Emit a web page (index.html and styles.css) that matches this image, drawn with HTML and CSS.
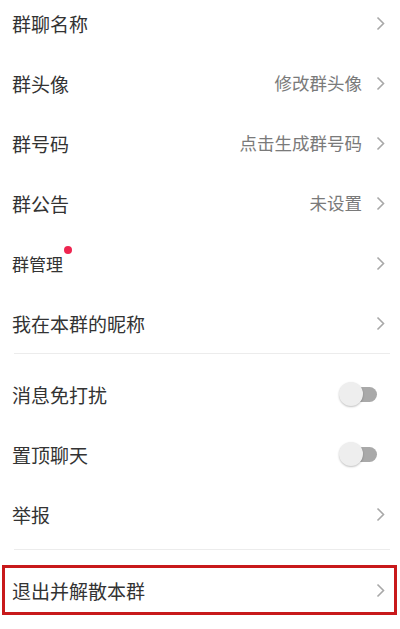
FILE: index.html
```html
<!DOCTYPE html>
<html lang="zh-CN">
<head>
  <meta charset="UTF-8">
  <title>群聊设置</title>
  <link rel="stylesheet" href="styles.css">
</head>
<body>

<div class="settings">
  <div class="group group-top">
    <div class="row">
      <span class="label">群聊名称</span>
      <span class="right"><svg class="chevron" viewBox="0 0 9 15"><path d="M1.5 1.5 L7.5 7.5 L1.5 13.5"/></svg></span>
    </div>
    <div class="row">
      <span class="label">群头像</span>
      <span class="right"><span class="value">修改群头像</span><svg class="chevron" viewBox="0 0 9 15"><path d="M1.5 1.5 L7.5 7.5 L1.5 13.5"/></svg></span>
    </div>
    <div class="row">
      <span class="label">群号码</span>
      <span class="right"><span class="value">点击生成群号码</span><svg class="chevron" viewBox="0 0 9 15"><path d="M1.5 1.5 L7.5 7.5 L1.5 13.5"/></svg></span>
    </div>
    <div class="row">
      <span class="label">群公告</span>
      <span class="right"><span class="value">未设置</span><svg class="chevron" viewBox="0 0 9 15"><path d="M1.5 1.5 L7.5 7.5 L1.5 13.5"/></svg></span>
    </div>
    <div class="row">
      <span class="label label-small has-dot">群管理</span>
      <span class="right"><svg class="chevron" viewBox="0 0 9 15"><path d="M1.5 1.5 L7.5 7.5 L1.5 13.5"/></svg></span>
    </div>
    <div class="row">
      <span class="label">我在本群的昵称</span>
      <span class="right"><svg class="chevron" viewBox="0 0 9 15"><path d="M1.5 1.5 L7.5 7.5 L1.5 13.5"/></svg></span>
    </div>
  </div>

  <div class="divider"></div>

  <div class="group group-mid">
    <div class="row">
      <span class="label">消息免打扰</span>
      <span class="switch"><span class="knob"></span></span>
    </div>
    <div class="row">
      <span class="label">置顶聊天</span>
      <span class="switch"><span class="knob"></span></span>
    </div>
    <div class="row">
      <span class="label">举报</span>
      <span class="right"><svg class="chevron" viewBox="0 0 9 15"><path d="M1.5 1.5 L7.5 7.5 L1.5 13.5"/></svg></span>
    </div>
  </div>

  <div class="divider divider-bottom"></div>

  <div class="row row-danger">
    <span class="label">退出并解散本群</span>
    <span class="right"><svg class="chevron" viewBox="0 0 9 15"><path d="M1.5 1.5 L7.5 7.5 L1.5 13.5"/></svg></span>
  </div>
</div>

</body>
</html>
```

FILE: styles.css
```css
body {
  margin: 0;
  background-color: #ffffff;
  font-family: "Noto Sans CJK SC", "Noto Sans", sans-serif;
  color: #333333;
  overflow: hidden;
}
.settings {
  margin-top: -7px;
}
.group-mid {
  padding-top: 10px;
}
.row {
  display: flex;
  align-items: center;
  justify-content: space-between;
  height: 60px;
  padding: 0 15px 0 12px;
  box-sizing: border-box;
}
.label {
  font-size: 19px;
  line-height: 1;
}
.label-small {
  font-size: 17px;
}
.has-dot {
  position: relative;
}
.has-dot::after {
  content: "";
  position: absolute;
  right: -9px;
  top: -9px;
  width: 8px;
  height: 8px;
  border-radius: 50%;
  background-color: #ee2550;
}
.right {
  display: flex;
  align-items: center;
  gap: 14px;
}
.value {
  font-size: 17.5px;
  color: #7a7a7a;
  line-height: 1;
}
.chevron {
  width: 9px;
  height: 15px;
  fill: none;
  stroke: #a8a8a8;
  stroke-width: 1.6;
}
.divider {
  height: 1px;
  margin: 0 10px 0 14px;
  background-color: #ececec;
}
.divider-bottom {
  margin-top: 5px;
}
.switch {
  position: relative;
  width: 36px;
  height: 15px;
  margin-right: 8px;
  border-radius: 8px;
  background-color: #a9a9a9;
}
.knob {
  position: absolute;
  left: -2px;
  top: -5px;
  width: 24px;
  height: 24px;
  border-radius: 50%;
  background-color: #eeeeee;
  box-shadow: 0 1px 2px rgba(0, 0, 0, 0.25);
}
.row-danger {
  height: 50px;
  margin: 15px 3px 0 2px;
  padding: 0 9px 0 7px;
  border: 3px solid #c8191b;
}
```
